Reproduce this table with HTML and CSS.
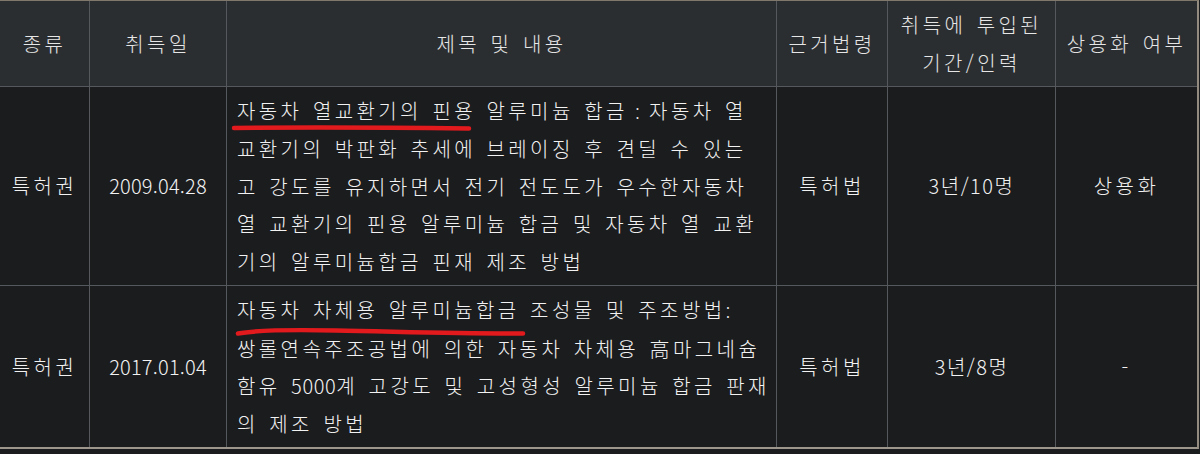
FILE: index.html
```html
<!DOCTYPE html>
<html lang="ko">
<head>
<meta charset="utf-8">
<title>특허 목록</title>
<link rel="stylesheet" href="styles.css">
</head>
<body>
<div class="table">
  <div class="th">종류</div>
  <div class="th">취득일</div>
  <div class="th">제목 및 내용</div>
  <div class="th">근거법령</div>
  <div class="th">취득에 투입된<br>기간/인력</div>
  <div class="th">상용화 여부</div>

  <div class="td">특허권</div>
  <div class="td date">2009.04.28</div>
  <div class="td text">
    <p>자동차 열교환기의 핀용 알루미늄 합금<span class="lat"> : </span>자동차 열<br>교환기의 박판화 추세에 브레이징 후 견딜 수 있는<br>고 강도를 유지하면서 전기 전도도가 우수한자동차<br>열 교환기의 핀용 알루미늄 합금 및 자동차 열 교환<br>기의 알루미늄합금 핀재 제조 방법</p>
    <svg class="mark mark-1" width="250" height="12" viewBox="0 0 250 12"><path d="M8 6 C 60 5.5, 150 5.5, 243 6.5" /></svg>
  </div>
  <div class="td">특허법</div>
  <div class="td dur">3년/10명</div>
  <div class="td">상용화</div>

  <div class="td">특허권</div>
  <div class="td date">2017.01.04</div>
  <div class="td text">
    <p>자동차 차체용 알루미늄합금 조성물 및 주조방법<span class="lat">:</span><br>쌍롤연속주조공법에 의한 자동차 차체용 高마그네슘<br>함유 <span class="num">5000</span>계 고강도 및 고성형성 알루미늄 합금 판재<br>의 제조 방법</p>
    <svg class="mark mark-2" width="310" height="14" viewBox="0 0 310 14"><path d="M12 8.5 C 30 5, 60 4.5, 110 5.5 C 170 6.5, 230 8.5, 297 8.5" /></svg>
  </div>
  <div class="td">특허법</div>
  <div class="td dur">3년/8명</div>
  <div class="td">-</div>
</div>
</body>
</html>
```
FILE: styles.css
```css
html, body {
  margin: 0;
  padding: 0;
  background: #1b1c1e;
}

body {
  font-family: "Noto Sans CJK KR", "Noto Sans", sans-serif;
  font-weight: 300;
  font-size: 20px;
  color: #f2f2f2;
}

.table {
  display: grid;
  grid-template-columns: 89px 136px 549px 110px 167px 141px;
  grid-template-rows: 85px 198px 161px;
  gap: 1px;
  width: 1197px;
  background: #55595d;
  border-top: 1px solid #80786a;
  border-right: 2px solid #938b7f;
  border-bottom: 2px solid #9c968c;
}

.th,
.td {
  display: flex;
  align-items: center;
  justify-content: center;
  text-align: center;
  line-height: 37.5px;
  letter-spacing: 3.4px;
  word-spacing: 1.5px;
}

.th {
  background: #2b2e31;
  color: #e6e6e6;
}

.td {
  background: #1b1c1e;
}

.td.date {
  letter-spacing: 0.2px;
}

.td.dur {
  letter-spacing: 1.5px;
}

.td.text {
  position: relative;
  justify-content: flex-start;
  text-align: left;
  padding-left: 10px;
}

.td.text p {
  margin: 0;
  white-space: nowrap;
}

.lat {
  font-family: "Noto Sans", "Liberation Sans", sans-serif;
  letter-spacing: 2px;
  word-spacing: 0;
}

.num {
  letter-spacing: 0.6px;
}

.mark {
  position: absolute;
  overflow: visible;
}

.mark path {
  fill: none;
  stroke: #e21a1d;
  stroke-width: 4.5;
  stroke-linecap: round;
}

.mark-1 {
  left: -1px;
  top: 35px;
}

.mark-2 {
  left: -1px;
  top: 39px;
}
```
